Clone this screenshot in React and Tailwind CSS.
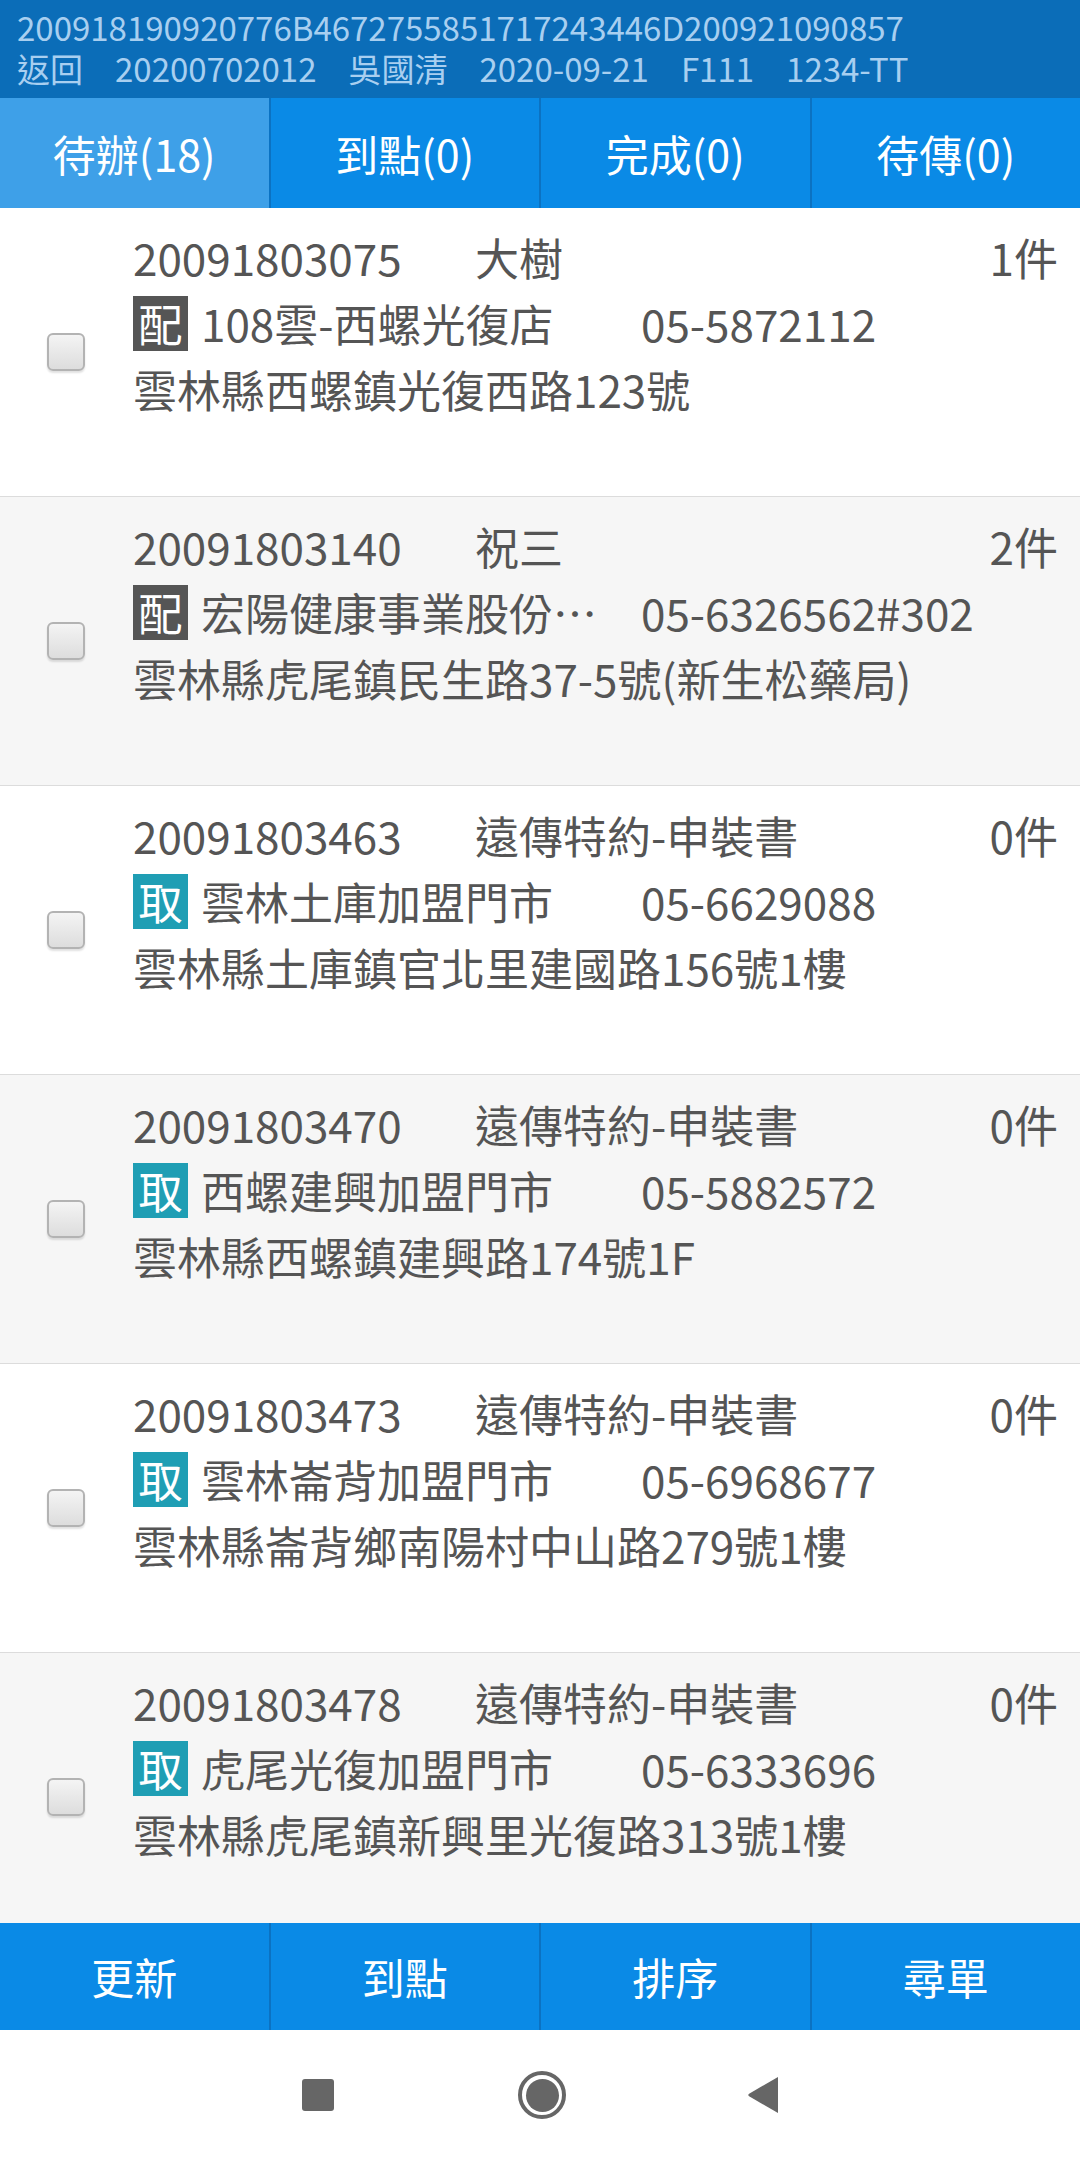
import React from "react";

const orders = [
  { id: "20091803075", who: "大樹", count: "1件", type: "配", name: "108雲-西螺光復店", phone: "05-5872112", addr: "雲林縣西螺鎮光復西路123號" },
  { id: "20091803140", who: "祝三", count: "2件", type: "配", name: "宏陽健康事業股份有限公司", phone: "05-6326562#302", addr: "雲林縣虎尾鎮民生路37-5號(新生松藥局)" },
  { id: "20091803463", who: "遠傳特約-申裝書", count: "0件", type: "取", name: "雲林土庫加盟門市", phone: "05-6629088", addr: "雲林縣土庫鎮官北里建國路156號1樓" },
  { id: "20091803470", who: "遠傳特約-申裝書", count: "0件", type: "取", name: "西螺建興加盟門市", phone: "05-5882572", addr: "雲林縣西螺鎮建興路174號1F" },
  { id: "20091803473", who: "遠傳特約-申裝書", count: "0件", type: "取", name: "雲林崙背加盟門市", phone: "05-6968677", addr: "雲林縣崙背鄉南陽村中山路279號1樓" },
  { id: "20091803478", who: "遠傳特約-申裝書", count: "0件", type: "取", name: "虎尾光復加盟門市", phone: "05-6333696", addr: "雲林縣虎尾鎮新興里光復路313號1樓" },
];

const tabs = [
  { label: "待辦(18)", active: true },
  { label: "到點(0)" },
  { label: "完成(0)" },
  { label: "待傳(0)" },
];

const actions = ["更新", "到點", "排序", "尋單"];

const OrderRow = ({ order, shaded }) => (
  <div className={`flex h-[289px] shrink-0 border-b border-[#dcdcdc] ${shaded ? "bg-[#f6f6f6]" : "bg-white"}`}>
    {/* checkbox column */}
    <div className="w-[133px] shrink-0 flex items-center pl-[47px]">
      <div className="w-[38px] h-[38px] rounded-[6px] border-2 border-[#b3b3b3] bg-gradient-to-b from-[#f4f4f4] to-[#dddddd] shadow-[0_2px_2px_rgba(0,0,0,0.12)]" />
    </div>

    <div className="flex-1 pt-[16px] pr-[22px] text-[44px] leading-[66px] text-[#555555]">
      <div className="flex">
        <span className="w-[342px] shrink-0">{order.id}</span>
        <span>{order.who}</span>
        <span className="ml-auto">{order.count}</span>
      </div>
      <div className="flex items-center">
        <span
          className={`w-[55px] h-[55px] shrink-0 flex items-center justify-center text-white leading-none ${
            order.type === "配" ? "bg-[#555555]" : "bg-[#1f9eb4]"
          }`}
        >
          {order.type}
        </span>
        <span className="ml-[13px] w-[410px] shrink-0 truncate">{order.name}</span>
        <span className="ml-[30px] whitespace-nowrap">{order.phone}</span>
      </div>
      <div className="whitespace-nowrap">{order.addr}</div>
    </div>
  </div>
);

const App = () => {
  return (
    <div className="w-[1080px] h-[2160px] flex flex-col bg-white overflow-hidden font-['Noto_Sans_CJK_TC','Noto_Sans',sans-serif]">
      {/* top info bar */}
      <header className="h-[98px] shrink-0 bg-[#0b6db8] text-[#a8cff0] text-[33px] leading-[41px] pt-[7px] px-[17px]">
        <div className="whitespace-nowrap">200918190920776B4672755851717243446D200921090857</div>
        <div className="flex gap-[32px] whitespace-nowrap">
          <span>返回</span>
          <span>20200702012</span>
          <span>吳國清</span>
          <span>2020-09-21</span>
          <span>F111</span>
          <span>1234-TT</span>
        </div>
      </header>

      {/* tabs */}
      <nav className="flex h-[110px] shrink-0">
        {tabs.map((tab, i) => (
          <div
            key={tab.label}
            className={`flex-1 flex items-center justify-center text-white text-[43px] ${
              tab.active ? "bg-[#3ea0e8]" : "bg-[#0a8ae6]"
            } ${i < 3 ? "border-r-2 border-[#0b72c2]" : ""}`}
          >
            {tab.label}
          </div>
        ))}
      </nav>

      {/* list */}
      <main className="flex-1 flex flex-col overflow-hidden">
        {orders.map((order, i) => (
          <OrderRow key={order.id} order={order} shaded={i % 2 === 1} />
        ))}
      </main>

      {/* bottom actions */}
      <div className="flex h-[107px] shrink-0 bg-[#0a8ae6]">
        {actions.map((a, i) => (
          <button
            key={a}
            className={`flex-1 flex items-center justify-center text-white text-[43px] ${i < 3 ? "border-r-2 border-[#0b72c2]" : ""}`}
          >
            {a}
          </button>
        ))}
      </div>

      {/* android nav bar */}
      <div className="h-[130px] shrink-0 bg-white flex items-center justify-center">
        <div className="w-[32px] h-[32px] rounded-[3px] bg-[#666666]" />
        <div className="ml-[184px] w-[48px] h-[48px] rounded-full border-[4px] border-[#666666] flex items-center justify-center">
          <div className="w-[33px] h-[33px] rounded-full bg-[#666666]" />
        </div>
        <svg className="ml-[181px]" width="31" height="36" viewBox="0 0 31 36">
          <path d="M31 0 L31 36 L2.5 19.5 Q0 18 2.5 16.5 Z" fill="#666666" />
        </svg>
      </div>
    </div>
  );
};

export default App;
